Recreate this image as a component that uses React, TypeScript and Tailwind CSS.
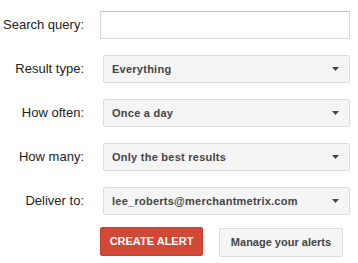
import React from "react";

function Arrow() {
  return (
    <svg width="7" height="4" viewBox="0 0 7 4" className="shrink-0">
      <polygon points="0,0 7,0 3.5,4" fill="#444" />
    </svg>
  );
}

function Select({ value }: { value: string }) {
  return (
    <div className="ml-[3px] flex h-[28px] w-[247px] items-center justify-between rounded-[2px] border border-[#dcdcdc] bg-[#f5f5f5] pl-[8px] pr-[10px] text-[11px] font-bold tracking-[0.25px] text-[#444]">
      <span>{value}</span>
      <Arrow />
    </div>
  );
}

function Row({ label, children }: { label: string; children: React.ReactNode }) {
  return (
    <div className="flex items-center">
      <div className="w-[84px] text-right text-[13px] text-[#222]">{label}</div>
      <div className="ml-[16px]">{children}</div>
    </div>
  );
}

export default function App() {
  return (
    <div
      className="flex h-[263px] w-[358px] flex-col gap-[16px] bg-white pt-[11px]"
      style={{ fontFamily: '"Liberation Sans", Arial, sans-serif' }}
    >
      <Row label="Search query:">
        <div className="h-[28px] w-[250px] border border-[#d9d9d9] border-t-[#c0c0c0] bg-white" />
      </Row>
      <Row label="Result type:">
        <Select value="Everything" />
      </Row>
      <Row label="How often:">
        <Select value="Once a day" />
      </Row>
      <Row label="How many:">
        <Select value="Only the best results" />
      </Row>
      <Row label="Deliver to:">
        <Select value="lee_roberts@merchantmetrix.com" />
      </Row>
      <div className="-mt-[4px] ml-[100px] flex items-start gap-[16px]">
        <div className="flex h-[29px] w-[103px] items-center justify-center rounded-[2px] border border-[#c6402f] bg-[#d14836] text-[11px] font-bold text-white">
          CREATE ALERT
        </div>
        <div className="mt-[1px] flex h-[29px] w-[124px] items-center justify-center rounded-[2px] border border-[#dcdcdc] bg-[#f5f5f5] text-[11px] font-bold text-[#444]">
          Manage your alerts
        </div>
      </div>
    </div>
  );
}
